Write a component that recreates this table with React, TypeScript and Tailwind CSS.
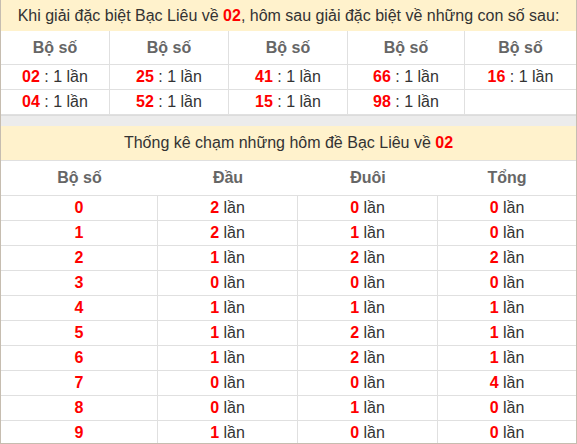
const pairs = [
  ["02", "04"],
  ["25", "52"],
  ["41", "15"],
  ["66", "98"],
  ["16", ""],
];

const stats = [
  [2, 0, 0],
  [2, 1, 0],
  [1, 2, 2],
  [0, 0, 0],
  [1, 1, 1],
  [1, 2, 1],
  [1, 2, 1],
  [0, 0, 4],
  [0, 1, 0],
  [1, 0, 0],
];

const Count = ({ n }: { n: number }) => (
  <span>
    <b className="text-[#ff0000]">{n}</b> <span className="text-[#333]">lần</span>
  </span>
);

export default function App() {
  return (
    <div
      className="w-[577px] h-[444px] overflow-hidden bg-white border-x border-b border-[#c6bdb0] text-[16px] text-[#333]"
      style={{ fontFamily: '"Liberation Sans", Arial, sans-serif' }}
    >
      {/* top table */}
      <div className="h-[31px] bg-[#fff2cc] flex items-center justify-center">
        <span>
          Khi giải đặc biệt Bạc Liêu về <b className="text-[#ff0000]">02</b>, hôm sau giải đặc biệt về những con số sau:
        </span>
      </div>
      <div className="grid grid-cols-[109px_119px_119px_117px_1fr]">
        {pairs.map((p, i) => (
          <div key={i} className={`flex flex-col ${i < 4 ? "border-r border-[#e0e0e0]" : ""}`}>
            <div className="h-[34px] flex items-center justify-center font-bold text-[#666] border-b border-[#e0e0e0]">
              Bộ số
            </div>
            {p.map((v, j) => (
              <div key={j} className="h-[25px] flex items-center justify-center border-b border-[#e0e0e0]">
                {v && (
                  <span>
                    <b className="text-[#ff0000]">{v}</b> : 1 lần
                  </span>
                )}
              </div>
            ))}
          </div>
        ))}
      </div>

      {/* spacer */}
      <div className="h-[11px] bg-[#ececec] border-t border-[#dcdcdc]" />

      {/* second table */}
      <div className="h-[34px] bg-[#fff2cc] flex items-center justify-center">
        <span>
          Thống kê chạm những hôm đề Bạc Liêu về <b className="text-[#ff0000]">02</b>
        </span>
      </div>
      <div className="grid grid-cols-[157px_140px_140px_1fr] border-t border-[#e0e0e0]">
        {["Bộ số", "Đầu", "Đuôi", "Tổng"].map((h) => (
          <div key={h} className="h-[35px] flex items-center justify-center font-bold text-[#666] border-b border-[#e0e0e0]">
            {h}
          </div>
        ))}
        {stats.map((r, i) => (
          <>
            <div key={`a${i}`} className="h-[25px] flex items-center justify-center font-bold text-[#ff0000] border-b border-r border-[#e0e0e0]">
              {i}
            </div>
            <div key={`b${i}`} className="h-[25px] flex items-center justify-center border-b border-r border-[#e0e0e0]">
              <Count n={r[0]} />
            </div>
            <div key={`c${i}`} className="h-[25px] flex items-center justify-center border-b border-r border-[#e0e0e0]">
              <Count n={r[1]} />
            </div>
            <div key={`d${i}`} className="h-[25px] flex items-center justify-center border-b border-[#e0e0e0]">
              <Count n={r[2]} />
            </div>
          </>
        ))}
      </div>
    </div>
  );
}
